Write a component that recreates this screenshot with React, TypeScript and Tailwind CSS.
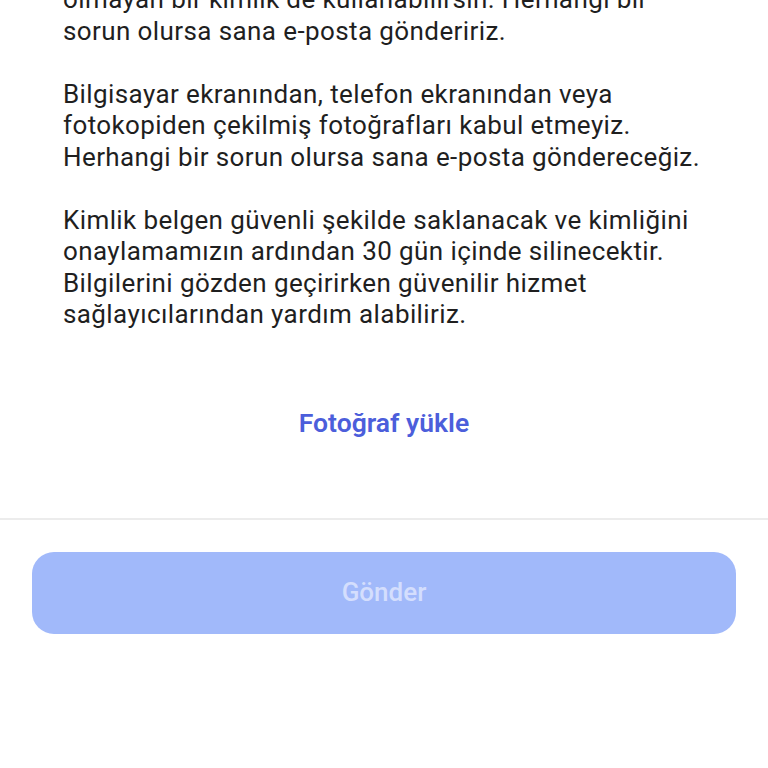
import React from "react";

const Line = ({ children }: { children: React.ReactNode }) => (
  <span className="block whitespace-nowrap">{children}</span>
);

export default function App() {
  return (
    <div
      className="w-[768px] h-[768px] overflow-hidden bg-white flex flex-col"
      style={{ fontFamily: "Roboto, 'Noto Sans', sans-serif" }}
    >
      <div className="-mt-[16px] pl-[63px] text-[26px] tracking-[0.4px] leading-[31.5px] text-[#1f1f1f] flex flex-col gap-[31.5px]">
        <p>
          <Line>olmayan bir kimlik de kullanabilirsin. Herhangi bir</Line>
          <Line>sorun olursa sana e-posta göndeririz.</Line>
        </p>
        <p>
          <Line>Bilgisayar ekranından, telefon ekranından veya</Line>
          <Line>fotokopiden çekilmiş fotoğrafları kabul etmeyiz.</Line>
          <Line>Herhangi bir sorun olursa sana e-posta göndereceğiz.</Line>
        </p>
        <p>
          <Line>Kimlik belgen güvenli şekilde saklanacak ve kimliğini</Line>
          <Line>onaylamamızın ardından 30 gün içinde silinecektir.</Line>
          <Line>Bilgilerini gözden geçirirken güvenilir hizmet</Line>
          <Line>sağlayıcılarından yardım alabiliriz.</Line>
        </p>
      </div>
      <div className="mt-[76px] flex justify-center">
        <span className="text-[26.5px] leading-[32px] font-semibold text-[#4c5edb]">
          Fotoğraf yükle
        </span>
      </div>
      <div className="mt-[79px] h-[2px] bg-[#ececec]" />
      <div className="px-[32px] pt-[32px]">
        <button className="w-full h-[82px] rounded-[22px] bg-[#a1b9fa] text-[26px] font-medium text-[#d4defd]">
          Gönder
        </button>
      </div>
    </div>
  );
}
